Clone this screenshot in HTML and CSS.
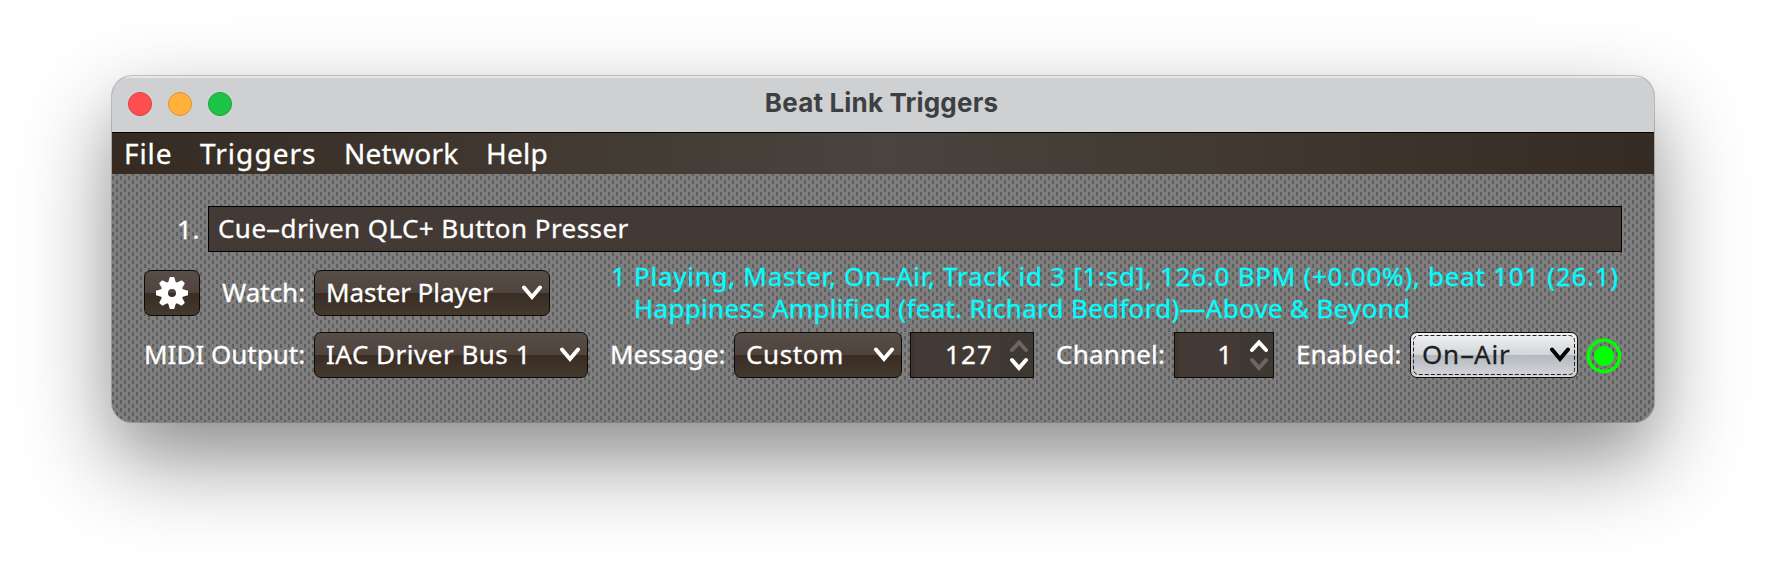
FILE: index.html
```
<!DOCTYPE html>
<html lang="en">
<head>
<meta charset="utf-8">
<title>Beat Link Triggers</title>
<link rel="stylesheet" href="styles.css">
</head>
<body>
<main class="window">
  <header class="titlebar">
    <div class="lights"><i class="light close"></i><i class="light minimize"></i><i class="light maximize"></i></div>
    <h1 class="title">Beat Link Triggers</h1>
  </header>
  <nav class="menubar"><span class="m-file">File</span><span class="m-trig">Triggers</span><span class="m-net">Network</span><span class="m-help">Help</span></nav>
  <section class="content">
    <div class="row row-name">
      <span class="index">1.</span>
      <div class="field"><span class="t-name">Cue<span class="hy">-</span>driven QLC+ Button Presser</span></div>
    </div>
    <div class="row row-watch">
      <button class="button gear" aria-label="Options">
        <svg width="32" height="32" viewBox="-16 -16 32 32"><g fill="#fff"><path id="tooth" d="M-2.2-16h4.4l1.8 6h-8zM-2.2 16h4.4l1.8-6h-8z"/><use href="#tooth" transform="rotate(45)"/><use href="#tooth" transform="rotate(90)"/><use href="#tooth" transform="rotate(135)"/></g><circle r="7.7" fill="none" stroke="#fff" stroke-width="7.4"/></svg>
      </button>
      <span class="label l-watch"><span class="t-watch">Watch:</span></span>
      <button class="button combo c-watch"><span class="t-master">Master Player</span><svg class="chevron" width="20" height="16" viewBox="0 0 20 16"><path d="M2 2.5l8 9.5 8-9.5"/></svg></button>
      <div class="status"><p class="line1"><span class="t-s1">1 Playing, Master, On<span class="hy">-</span>Air, Track id 3 [1:sd], 126.0 BPM (+0.00%), beat 101 (26.1)</span></p><p class="line2"><span class="t-s2">Happiness Amplified (feat. Richard Bedford)—Above &amp; Beyond</span></p></div>
    </div>
    <div class="row row-midi">
      <span class="label l-midi"><span class="t-midi">MIDI Output:</span></span>
      <button class="button combo c-midi"><span class="t-iac">IAC Driver Bus 1</span><svg class="chevron" width="20" height="16" viewBox="0 0 20 16"><path d="M2 2.5l8 9.5 8-9.5"/></svg></button>
      <span class="label l-message"><span class="t-message">Message:</span></span>
      <button class="button combo c-message"><span class="t-custom">Custom</span><svg class="chevron" width="20" height="16" viewBox="0 0 20 16"><path d="M2 2.5l8 9.5 8-9.5"/></svg></button>
      <div class="spinner s-note"><span class="value t-127">127</span><svg width="18" height="32" viewBox="0 0 18 32"><path class="dim" d="M2 11l7-7.5 7 7.5"/><path d="M2 21l7 8 7-8"/></svg></div>
      <span class="label l-channel"><span class="t-channel">Channel:</span></span>
      <div class="spinner s-channel"><span class="value">1</span><svg width="18" height="32" viewBox="0 0 18 32"><path d="M2 11l7-7.5 7 7.5"/><path class="dim" d="M2 21l7 8 7-8"/></svg></div>
      <span class="label l-enabled"><span class="t-enabled">Enabled:</span></span>
      <button class="button combo focused c-enabled"><span class="t-onair">On<span class="hy">-</span>Air</span><svg class="chevron" width="20" height="16" viewBox="0 0 20 16"><path d="M2 2.5l8 9.5 8-9.5"/></svg><svg class="focus-ring" width="162" height="40"><rect x=".5" y=".5" width="161" height="39" rx="5"/></svg></button>
      <svg class="indicator" width="36" height="36" viewBox="-18 -18 36 36"><circle r="15.7"/><circle class="dot" r="10.2"/></svg>
    </div>
  </section>
</main>
</body>
</html>
```
FILE: styles.css
```
* { box-sizing: border-box; }
body { margin: 0; height: 570px; overflow: hidden; background: #fff; color: #fff; font: 26px/32px "Noto Sans", sans-serif; padding: 76px 112px 0; -webkit-text-stroke: .3px; }
.window { width: 1542px; height: 346px; border-radius: 20px; overflow: hidden; background: #7f7f7f; box-shadow: 0 0 0 1px rgba(0,0,0,.2), 0 38px 90px rgba(0,0,0,.43), 0 24px 44px rgba(0,0,0,.05); display: flex; flex-direction: column; }
.titlebar { height: 56px; background: #cfd0d2; border-top: 2px solid #e6e7e8; display: grid; grid-template-columns: 1fr auto 1fr; align-items: center; }
.lights { display: flex; gap: 16px; padding: 0 0 2px 16px; }
.light { width: 24px; height: 24px; border-radius: 50%; border: 1px solid; }
.close { background: #ff4f50; border-color: #dd3b40; }
.minimize { background: #ffb13b; border-color: #dd9430; }
.maximize { background: #1ec447; border-color: #16a338; }
.title { margin: 0; color: #3d4042; font: bold 26px/48px Inter, sans-serif; letter-spacing: .18px; padding: 0 3px 5px 0; -webkit-text-stroke: 0; }
.menubar { height: 42px; border-top: 1px solid #000; background: linear-gradient(90deg, #352b22, #4a443e 50%, #352b22); font-size: 28px; line-height: 40px; padding-left: 12px; display: grid; grid-template-columns: 76px 144px 142px auto; }
.m-file { letter-spacing: .9px; }
.m-trig { letter-spacing: 1.05px; }
.m-net, .m-help { letter-spacing: .25px; }
.content { flex: 1; padding: 32px 32px 0; background: url("data:image/svg+xml,%3Csvg xmlns='http://www.w3.org/2000/svg' width='8' height='8'%3E%3Cpath fill='%237e7e7e' d='M0 0h8v8H0z'/%3E%3Cpath fill='%235e5e5e' d='M0 2h2v4H0zM4 6h2v2H4zM4 0h2v2H4z'/%3E%3C/svg%3E"); }
.row { display: flex; }
.row-name { height: 46px; align-items: center; }
.index { width: 64px; padding-right: 8px; text-align: right; letter-spacing: .6px; }
.field { flex: 1; height: 46px; background: #433a35; border: 1px solid #000; line-height: 42px; padding-left: 9px; }
.row-watch { margin-top: 18px; height: 46px; }
.row-midi { margin-top: 16px; height: 46px; }
.button { font: inherit; color: #fff; border: 1px solid #0f0a06; border-radius: 7px; background: linear-gradient(#574d47, #4f443d 50%, #382c23 50%, #44392f); padding: 0; height: 46px; position: relative; }
.gear { width: 56px; display: grid; place-items: center; }
.label { line-height: 44px; white-space: nowrap; }
.combo { display: flex; align-items: center; justify-content: space-between; padding: 0 7px 0 11px; white-space: nowrap; line-height: 42px; }
.combo > span { padding-bottom: 2px; }
.hy { display: inline-block; width: 14px; text-align: center; letter-spacing: 0; transform: scaleX(1.8); }
.chevron path, .spinner path { fill: none; stroke: #fff; stroke-width: 4; stroke-linecap: round; }
.spinner .dim { stroke: #6a6663; }
.t-name { letter-spacing: .44px; }
.t-master { letter-spacing: -.08px; }
.t-s1 { letter-spacing: .72px; }
.t-s2 { letter-spacing: .3px; }
.t-iac { letter-spacing: .5px; }
.t-custom { letter-spacing: .6px; }
.t-onair { letter-spacing: .8px; }
.t-channel { letter-spacing: .2px; }
.t-127 { letter-spacing: 1.1px; margin-right: -1px; }
.l-watch { width: 114px; padding-left: 22px; }
.c-watch { width: 236px; }
.status { margin: -10px 0 0 61px; color: #0ff; white-space: nowrap; }
.status p { margin: 0; }
.line2 { padding-left: 23px; }
.l-midi { width: 170px; }
.c-midi { width: 274px; }
.l-message { width: 146px; padding-left: 22px; }
.c-message { width: 168px; margin-right: 8px; }
.spinner { height: 46px; border: 1px solid #0f0a06; background: linear-gradient(90deg, #3d362f 4px, #433a35 4px calc(100% - 33px), #3d3831 calc(100% - 33px)); display: flex; justify-content: flex-end; align-items: center; gap: 18px; padding-right: 5px; }
.value { padding-bottom: 2px; }
.s-note { width: 124px; }
.l-channel { width: 140px; padding-left: 22px; }
.s-channel { width: 100px; }
.l-enabled { width: 136px; padding-left: 22px; }
.c-enabled { width: 168px; margin-right: 8px; }
.focused { color: #1b1f24; background: linear-gradient(#f2f3f5, #d2d5d9 50%, #b4b8bd 50%, #d4d7da); }
.focused .chevron path { stroke: #000; }
.focus-ring { position: absolute; left: 2px; top: 2px; }
.focus-ring rect { fill: none; stroke: #222; stroke-dasharray: 4 2; }
.indicator { margin-top: 6px; }
.indicator circle { fill: none; stroke: #0f0; stroke-width: 3.5; }
.indicator .dot { fill: #0f0; stroke: none; }
```
